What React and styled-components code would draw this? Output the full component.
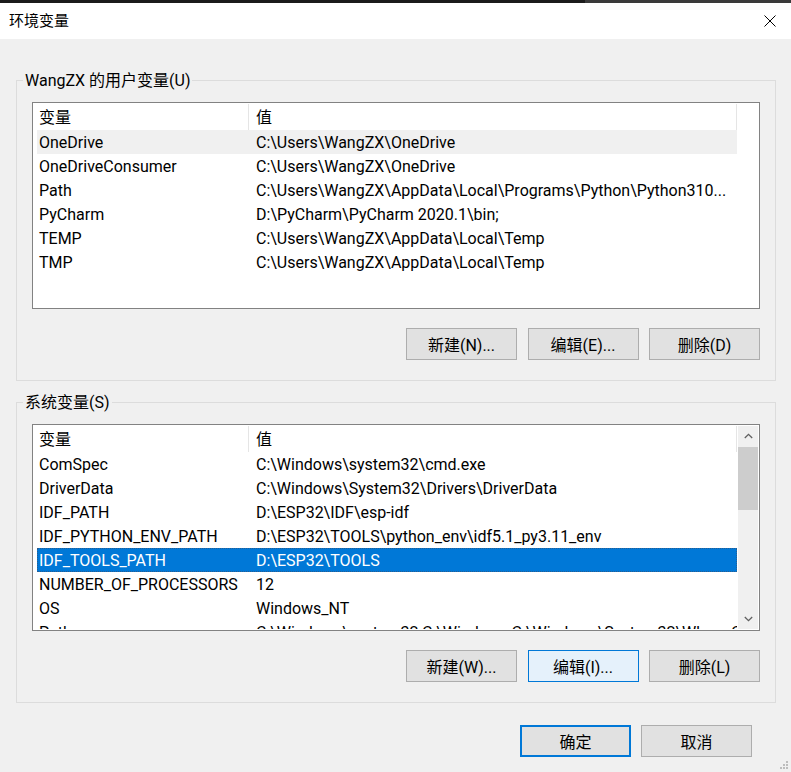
import React from "react";
import styled, { createGlobalStyle } from "styled-components";

const GlobalStyle = createGlobalStyle`
html, body {
  margin: 0;
  padding: 0;
  background: #f0f0f0;
}
body {
  font-family: Roboto, "Noto Sans CJK SC", sans-serif;
  font-size: 16px;
  color: #000;
}
`;

const Window = styled.div`
position: relative;
width: 791px;
height: 772px;
display: flex;
flex-direction: column;
background: #f0f0f0;
overflow: hidden;
`;
const TopEdge = styled.div`
height: 3px;
background: linear-gradient(to right, #1b1b1b 585px, #3a3a3a 585px);
`;
const TitleBar = styled.div`
height: 36px;
display: flex;
align-items: center;
justify-content: space-between;
padding: 0 15px 0 9px;
background: #fff;
`;
const Title = styled.span`
font-size: 15px;
line-height: 20px;
`;
const CloseIcon = styled.svg`
width: 12px;
height: 12px;
display: block;
`;
const Content = styled.div`
display: flex;
flex-direction: column;
padding: 0 15px 0 16px;
`;
const Group = styled.fieldset`
margin: ${props => props.$top}px 0 0;
padding: 11px 15px 20px;
border: 1px solid #dcdcdc;
min-width: 0;
`;
const Legend = styled.legend`
margin-left: -9px;
padding: 2px 2px 0;
line-height: 20px;
`;
const List = styled.div`
box-sizing: border-box;
height: 207px;
display: flex;
padding: 1px;
border: 1px solid #828282;
background: #fff;
overflow: hidden;
`;
const ListBody = styled.div`
flex: 1;
min-width: 0;
padding-left: 3px;
overflow: hidden;
`;
const HeaderRow = styled.div`
display: grid;
grid-template-columns: 212px 488px;
height: 26px;
`;
const HeaderCell = styled.div`
box-sizing: border-box;
padding: 1px 0 0 ${props => (props.$first ? 2 : 7)}px;
border-right: 1px solid #e5e5e5;
line-height: 25px;
`;
const Row = styled.div`
box-sizing: border-box;
display: grid;
grid-template-columns: 212px 488px;
width: 700px;
height: 24px;
background: ${props =>
  props.$state === "selected" ? "#0078d7" : props.$state === "soft" ? "#f0f0f0" : "transparent"};
color: ${props => (props.$state === "selected" ? "#fff" : "#000")};
outline: ${props => (props.$state === "selected" ? "1px dotted #2a5d8f" : "none")};
outline-offset: -1px;
`;
const Cell = styled.div`
padding: 1px 0 0 ${props => (props.$first ? 2 : 7)}px;
line-height: 23px;
white-space: nowrap;
overflow: hidden;
`;
const Scrollbar = styled.div`
width: 20px;
display: flex;
flex-direction: column;
background: #f0f0f0;
`;
const ScrollArrow = styled.div`
height: 20px;
display: flex;
align-items: center;
justify-content: center;
`;
const Track = styled.div`
flex: 1;
padding-top: 1px;
`;
const Thumb = styled.div`
height: 63px;
background: #cdcdcd;
`;
const ButtonRow = styled.div`
display: flex;
justify-content: flex-end;
gap: 10.5px;
margin-top: 19px;
`;
const Button = styled.button`
box-sizing: border-box;
width: 111px;
height: 32px;
padding: 0;
font: inherit;
color: #000;
background: ${props => (props.$hot ? "#e5f1fb" : "#e1e1e1")};
border: ${props => (props.$default ? 2 : 1)}px solid
  ${props => (props.$hot || props.$default ? "#0078d7" : "#adadad")};
`;
const Footer = styled.div`
display: flex;
justify-content: flex-end;
gap: 10px;
margin: 22px 24px 0 0;
`;
const Grip = styled.svg`
position: absolute;
right: 3px;
bottom: 3px;
width: 8px;
height: 8px;
`;

const userVars = [
  ["OneDrive", "C:\\Users\\WangZX\\OneDrive"],
  ["OneDriveConsumer", "C:\\Users\\WangZX\\OneDrive"],
  ["Path", "C:\\Users\\WangZX\\AppData\\Local\\Programs\\Python\\Python310..."],
  ["PyCharm", "D:\\PyCharm\\PyCharm 2020.1\\bin;"],
  ["TEMP", "C:\\Users\\WangZX\\AppData\\Local\\Temp"],
  ["TMP", "C:\\Users\\WangZX\\AppData\\Local\\Temp"],
];

const systemVars = [
  ["ComSpec", "C:\\Windows\\system32\\cmd.exe"],
  ["DriverData", "C:\\Windows\\System32\\Drivers\\DriverData"],
  ["IDF_PATH", "D:\\ESP32\\IDF\\esp-idf"],
  ["IDF_PYTHON_ENV_PATH", "D:\\ESP32\\TOOLS\\python_env\\idf5.1_py3.11_env"],
  ["IDF_TOOLS_PATH", "D:\\ESP32\\TOOLS"],
  ["NUMBER_OF_PROCESSORS", "12"],
  ["OS", "Windows_NT"],
  ["Path", "C:\\Windows\\system32;C:\\Windows;C:\\Windows\\System32\\Wbem;C:\\Windows\\System32\\WindowsPowerShell\\v1.0\\"],
];

const Chevron = ({ up }) => (
  <svg width="9" height="6" viewBox="0 0 9 6">
    <path
      d={up ? "M0.8 5 L4.5 1.3 L8.2 5" : "M0.8 1 L4.5 4.7 L8.2 1"}
      fill="none"
      stroke="#606060"
      strokeWidth="1.3"
    />
  </svg>
);

const VarList = ({ rows, selected, soft, scroll }) => (
  <List>
    <ListBody>
      <HeaderRow>
        <HeaderCell $first>变量</HeaderCell>
        <HeaderCell>值</HeaderCell>
      </HeaderRow>
      {rows.map(([name, value], i) => (
        <Row key={name + i} $state={i === selected ? "selected" : i === soft ? "soft" : ""}>
          <Cell $first>{name}</Cell>
          <Cell>{value}</Cell>
        </Row>
      ))}
    </ListBody>
    {scroll && (
      <Scrollbar>
        <ScrollArrow><Chevron up /></ScrollArrow>
        <Track><Thumb /></Track>
        <ScrollArrow><Chevron /></ScrollArrow>
      </Scrollbar>
    )}
  </List>
);

const App = () => {
  return (
    <Window>
      <GlobalStyle />
      <TopEdge />
      <TitleBar>
        <Title>环境变量</Title>
        <CloseIcon viewBox="0 0 12 12">
          <path d="M0.5 0.5 L11.5 11.5 M11.5 0.5 L0.5 11.5" stroke="#000" strokeWidth="1" />
        </CloseIcon>
      </TitleBar>
      <Content>
        <Group $top={30}>
          <Legend>WangZX 的用户变量(U)</Legend>
          <VarList rows={userVars} soft={0} />
          <ButtonRow>
            <Button>新建(N)...</Button>
            <Button>编辑(E)...</Button>
            <Button>删除(D)</Button>
          </ButtonRow>
        </Group>
        <Group $top={10}>
          <Legend>系统变量(S)</Legend>
          <VarList rows={systemVars} selected={4} scroll />
          <ButtonRow>
            <Button>新建(W)...</Button>
            <Button $hot>编辑(I)...</Button>
            <Button>删除(L)</Button>
          </ButtonRow>
        </Group>
        <Footer>
          <Button $default>确定</Button>
          <Button>取消</Button>
        </Footer>
      </Content>
      <Grip viewBox="0 0 8 8">
        <rect x="6" y="0" width="2" height="2" fill="#bdbdbd" />
        <rect x="3" y="3" width="2" height="2" fill="#bdbdbd" />
        <rect x="6" y="3" width="2" height="2" fill="#bdbdbd" />
        <rect x="0" y="6" width="2" height="2" fill="#bdbdbd" />
        <rect x="3" y="6" width="2" height="2" fill="#bdbdbd" />
        <rect x="6" y="6" width="2" height="2" fill="#bdbdbd" />
      </Grip>
    </Window>
  );
};

export default App;
